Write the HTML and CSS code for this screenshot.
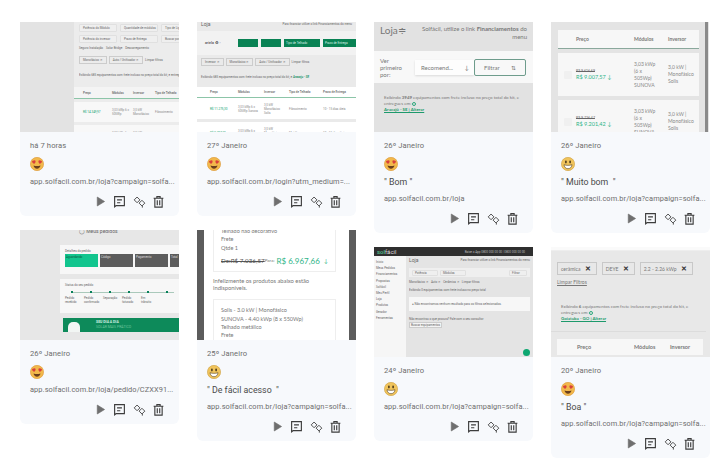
FILE: index.html
```html
<!DOCTYPE html>
<html lang="pt-BR">
<head>
  <meta charset="UTF-8" />
  <title>Feedbacks</title>
  <link rel="stylesheet" href="styles.css">
</head>
<body>

<svg class="sprite" width="0" height="0">
  <symbol id="love" viewBox="0 0 16 16">
    <circle cx="8" cy="8" r="7.6" fill="#f2b84b" stroke="#d9922f" stroke-width=".6"/>
    <path d="M4.600 4.200c-1.300-.8-2.600.3-2.200 1.600.3 1 1.400 1.700 2.400 2.100.8-.7 1.700-1.700 1.600-2.700-.1-1.200-1.200-1.800-1.800-1z" fill="#d8403a"/>
    <path d="M11.400 4.200c1.300-.8 2.600.3 2.200 1.600-.3 1-1.400 1.700-2.400 2.100-.8-.7-1.700-1.700-1.600-2.700.1-1.200 1.200-1.800 1.800-1z" fill="#d8403a"/>
    <path d="M4 9.800c2.600.8 5.400.8 8 0-.4 2.200-2 3.700-4 3.700s-3.600-1.500-4-3.700z" fill="#6b3f1d"/>
  </symbol>
  <symbol id="smile" viewBox="0 0 16 16">
    <circle cx="8" cy="8" r="7.6" fill="#f0c45c" stroke="#c99a3a" stroke-width=".6"/>
    <ellipse cx="5.600" cy="5.600" rx="1" ry="1.700" fill="#4c3a1c"/>
    <ellipse cx="10.400" cy="5.600" rx="1" ry="1.700" fill="#4c3a1c"/>
    <path d="M3.400 8.800c3 1 6.200 1 9.200 0-.3 2.800-2.300 4.600-4.600 4.600s-4.300-1.800-4.600-4.600z" fill="#fff" stroke="#5b431c" stroke-width=".7"/>
  </symbol>
  <symbol id="play" viewBox="0 0 16 16">
    <path d="M4 2.500l9 5.500-9 5.500z" fill="#6f6f6f" stroke="#6f6f6f" stroke-width=".8"/>
  </symbol>
  <symbol id="note" viewBox="0 0 16 16">
    <path d="M2 2h12v11h-10l-2 1.500zM5 6h6M5 9.500h4" fill="none" stroke="#3d3d3d" stroke-width="1.400"/>
  </symbol>
  <symbol id="swap" viewBox="0 0 16 16">
    <path d="M5 2.500L8.500 6 5 9.500 1.500 6zM11 6.500l3.500 3.500-3.500 3.500L7.500 10zM11.500 13.500v2" fill="none" stroke="#4a4a4a" stroke-width="1.200"/>
  </symbol>
  <symbol id="trash" viewBox="0 0 16 16">
    <path d="M2 4h12M6 4V2h4v2M3.500 4.500v10.500h9v-10.500M6.500 6.500v6M9.500 6.500v6" fill="none" stroke="#3d3d3d" stroke-width="1.400"/>
  </symbol>
</svg>

<main class="board">

  <div class="col">
    <article class="card">
      <div class="thumb t-filters">
        <div class="side"></div>
        <div class="main">
          <div class="sel-row"><span class="sel">Potência do Módulo</span><span class="sel">Quantidade de módulos</span><span class="sel">Tipo de Ligação</span></div>
          <div class="sel-row"><span class="sel">Potência do inversor</span><span class="sel">Prazo de Entrega</span><span class="sel">Buscar por nome</span></div>
          <div class="tiny toggles">Seguro Instalação &nbsp;&nbsp; Solar Bridge &nbsp;&nbsp; Descarregamento</div>
          <div class="chips"><span class="chip">Monofásico ✕</span><span class="chip">Auto / Unificador ✕</span><span class="tiny">Limpar filtros</span></div>
          <div class="tiny count">Exibindo 685 equipamentos com frete incluso no preço total do kit, e entregues em <b>Aracaju</b></div>
          <div class="table-head"><span>Preço</span><span>Módulos</span><span>Inversor</span><span>Tipo de Telhado</span></div>
          <div class="table-row"><span class="price">R$ 14.349,97</span><span>3,03 kWp 6 x 505Wp</span><span>3,0 kW Monofásico</span><span>Fibrocimento</span></div>
          <div class="table-row"><span class="price">R$ 14.980,10</span><span>3,03 kWp 6 x 505Wp</span><span>3,0 kW Monofásico</span><span>Fibrocimento</span></div>
        </div>
      </div>
      <div class="body">
        <div class="date">há 7 horas</div>
        <svg class="emoji"><use href="#love"/></svg>
        <div class="url">app.solfacil.com.br/loja?campaign=solfa...</div>
        <div class="actions">
          <svg class="icon"><use href="#play"/></svg><svg class="icon"><use href="#note"/></svg><svg class="icon"><use href="#swap"/></svg><svg class="icon"><use href="#trash"/></svg>
        </div>
      </div>
    </article>

    <article class="card">
      <div class="thumb t-order">
        <div class="tiny order-title">◯ Meus pedidos</div>
        <div class="panel">
          <div class="tiny">Detalhes do pedido</div>
          <div class="tiles"><span class="tile on">Aguardando</span><span class="tile">Código</span><span class="tile">Pagamento</span><span class="tile">Total</span></div>
        </div>
        <div class="panel steps">
          <div class="tiny">Status do seu pedido</div>
          <div class="line"><i></i><i></i><i></i><i></i><i></i><i></i></div>
          <div class="tiny step-names"><span>Pedido recebido</span><span>Pedido confirmado</span><span>Separação</span><span>Pedido faturado</span><span>Em trânsito</span></div>
        </div>
        <div class="banner"><span class="person"></span><div class="banner-text"><b>SEU DIA A DIA</b><span>SOLAR MAIS PRÁTICO</span></div></div>
      </div>
      <div class="body">
        <div class="date">26º Janeiro</div>
        <svg class="emoji"><use href="#love"/></svg>
        <div class="url">app.solfacil.com.br/loja/pedido/CZXX91...</div>
        <div class="actions">
          <svg class="icon"><use href="#play"/></svg><svg class="icon"><use href="#note"/></svg><svg class="icon"><use href="#swap"/></svg><svg class="icon"><use href="#trash"/></svg>
        </div>
      </div>
    </article>
  </div>

  <div class="col">
    <article class="card">
      <div class="thumb t-store">
        <div class="store-title"><span>Loja</span><span class="tiny">Para financiar utilize o link Financiamentos do menu</span></div>
        <div class="store-bar">
          <span class="brand">ariela ♻ ◦</span>
          <span class="gbtn"></span><span class="gbtn"></span><span class="gbtn wide">Tipo de Telhado</span><span class="gbtn wide">Prazo de Entrega</span>
        </div>
        <div class="chips"><span class="chip">Inversor ✕</span><span class="chip">Monofásico ✕</span><span class="chip">Auto / Unificador ✕</span><span class="tiny">Limpar filtros</span></div>
        <div class="tiny count">Exibindo 685 equipamentos com frete incluso no preço total do kit, e <b>Aracaju - SE</b></div>
        <div class="table-head"><span>Preço</span><span>Módulos</span><span>Inversor</span><span>Tipo de Telhado</span><span>Prazo de Entrega</span></div>
        <div class="table-row"><span class="price">R$ 11.275,30</span><span>3,03 kWp 6 x 505Wp Sunova</span><span>3,0 kW Monofásico Solis</span><span>Fibrocimento</span><span>10 - 15 dias úteis</span></div>
        <div class="table-row"><span class="price">R$ 9.797,30</span><span>3,03 kWp 6 x 505Wp Sunova</span><span>3,0 kW Monofásico Solis</span><span>Metálico</span><span>10 - 15 dias úteis</span></div>
      </div>
      <div class="body">
        <div class="date">27º Janeiro</div>
        <svg class="emoji"><use href="#love"/></svg>
        <div class="url">app.solfacil.com.br/login?utm_medium=...</div>
        <div class="actions">
          <svg class="icon"><use href="#play"/></svg><svg class="icon"><use href="#note"/></svg><svg class="icon"><use href="#swap"/></svg><svg class="icon"><use href="#trash"/></svg>
        </div>
      </div>
    </article>

    <article class="card">
      <div class="thumb t-cart">
        <div class="cart-box first">
          <div>Telhado não decorativo</div>
          <div>Frete</div>
          <div>Qtde 1</div>
          <div class="cart-price"><s>De:R$ 7.036,57</s><small>Para:</small><b>R$ 6.967,66</b><em>↓</em></div>
        </div>
        <p>Infelizmente os produtos abaixo estão indisponíveis.</p>
        <div class="cart-box">
          <div>Solis - 3.0 kW | Monofásico</div>
          <div>SUNOVA - 4.40 kWp (8 x 550Wp)</div>
          <div>Telhado metálico</div>
          <div>Frete</div>
        </div>
      </div>
      <div class="body">
        <div class="date">25º Janeiro</div>
        <svg class="emoji"><use href="#smile"/></svg>
        <div class="quote">" De fácil acesso  "</div>
        <div class="url">app.solfacil.com.br/loja?campaign=solfa...</div>
        <div class="actions">
          <svg class="icon"><use href="#play"/></svg><svg class="icon"><use href="#note"/></svg><svg class="icon"><use href="#swap"/></svg><svg class="icon"><use href="#trash"/></svg>
        </div>
      </div>
    </article>
  </div>

  <div class="col">
    <article class="card">
      <div class="thumb t-mobile">
        <div class="m-top"><span class="m-title">Loja≑</span><span class="m-note">Solfácil, utilize o link <b>Financiamentos</b> do menu</span></div>
        <div class="m-sort">
          <span class="m-label">Ver primeiro por:</span>
          <span class="m-select">Recomend... <i>↓</i></span>
          <span class="m-filter">Filtrar <i>⇅</i></span>
        </div>
        <div class="m-count">Exibindo <b>3949</b> equipamentos com frete incluso no preço total do kit, e entregues em: <i class="pin"></i><br><a>Aracajú - SE | Alterar</a></div>
      </div>
      <div class="body">
        <div class="date">26º Janeiro</div>
        <svg class="emoji"><use href="#love"/></svg>
        <div class="quote">" Bom "</div>
        <div class="url">app.solfacil.com.br/loja</div>
        <div class="actions">
          <svg class="icon"><use href="#play"/></svg><svg class="icon"><use href="#note"/></svg><svg class="icon"><use href="#swap"/></svg><svg class="icon"><use href="#trash"/></svg>
        </div>
      </div>
    </article>

    <article class="card">
      <div class="thumb t-desktop">
        <div class="d-head"><span class="d-logo"><b>sol</b>fácil</span><span class="tiny">Baixe o App 0800 000 00 00 | 0800 000 00 00</span></div>
        <div class="d-wrap">
          <div class="d-side tiny">
            <div>Inicio</div><div>Meus Pedidos</div><div>Financiamentos</div><div>Propostas</div><div>Solfácil</div><div>Meu Perfil</div><div>Loja</div><div>Produtos</div><div>Gerador</div><div>Ferramentas</div>
          </div>
          <div class="d-main">
            <div class="d-title"><span>Loja</span><span class="tiny">Para financiar utilize o link Financiamentos do menu</span></div>
            <div class="d-filter"><span class="sel">Potência</span><span class="sel">Módulos</span><span class="sel end">Filtrar</span></div>
            <div class="tiny">Monofásico ✕ &nbsp; Auto ✕ &nbsp; Cerâmica ✕ &nbsp; Limpar filtros</div>
            <div class="tiny count">Exibindo 0 equipamentos com frete incluso no preço total</div>
            <div class="d-alert tiny">● Não encontramos nenhum resultado para os filtros selecionados.</div>
            <div class="tiny">Não encontrou o que procura? Fale com o seu consultor</div>
            <span class="d-btn tiny">Buscar equipamentos</span>
          </div>
        </div>
        <span class="d-fab"></span>
      </div>
      <div class="body">
        <div class="date">24º Janeiro</div>
        <svg class="emoji"><use href="#smile"/></svg>
        <div class="url">app.solfacil.com.br/loja?campaign=solfa...</div>
        <div class="actions">
          <svg class="icon"><use href="#play"/></svg><svg class="icon"><use href="#note"/></svg><svg class="icon"><use href="#swap"/></svg><svg class="icon"><use href="#trash"/></svg>
        </div>
      </div>
    </article>
  </div>

  <div class="col">
    <article class="card">
      <div class="thumb t-list">
        <div class="l-head"><span>Preço</span><span>Módulos</span><span>Inversor</span></div>
        <div class="l-row">
          <span class="l-check"></span>
          <span class="l-price"><s>R$ 9.616,69</s><b>R$ 9.007,57 ↓</b></span>
          <span class="l-mod">3,03 kWp (6 x 505Wp) SUNOVA</span>
          <span class="l-inv">3,0 kW | Monofásico Solis</span>
        </div>
        <div class="l-row">
          <span class="l-check"></span>
          <span class="l-price"><s>R$ 9.726,47</s><b>R$ 9.201,42 ↓</b></span>
          <span class="l-mod">3,03 kWp (6 x 505Wp) SUNOVA</span>
          <span class="l-inv">3,0 kW | Monofásico Solis</span>
        </div>
      </div>
      <div class="body">
        <div class="date">26º Janeiro</div>
        <svg class="emoji"><use href="#smile"/></svg>
        <div class="quote">" Muito bom  "</div>
        <div class="url">app.solfacil.com.br/loja?campaign=solfa...</div>
        <div class="actions">
          <svg class="icon"><use href="#play"/></svg><svg class="icon"><use href="#note"/></svg><svg class="icon"><use href="#swap"/></svg><svg class="icon"><use href="#trash"/></svg>
        </div>
      </div>
    </article>

    <article class="card">
      <div class="thumb t-tags">
        <div class="t-top"></div>
        <div class="tags"><span class="tag">cerâmica <b>✕</b></span><span class="tag">DEYE <b>✕</b></span><span class="tag">2.2 - 2.26 kWp <b>✕</b></span></div>
        <a class="clear">Limpar Filtros</a>
        <div class="m-count">Exibindo <b>6</b> equipamentos com frete incluso no preço total do kit, e entregues em: <i class="pin"></i><br><a>Goiatuba - GO | Alterar</a></div>
        <div class="tag-head"><span>Preço</span><span>Módulos</span><span>Inversor</span></div>
      </div>
      <div class="body">
        <div class="date">20º Janeiro</div>
        <svg class="emoji"><use href="#love"/></svg>
        <div class="quote">" Boa "</div>
        <div class="url">app.solfacil.com.br/loja?campaign=solfa...</div>
        <div class="actions">
          <svg class="icon"><use href="#play"/></svg><svg class="icon"><use href="#note"/></svg><svg class="icon"><use href="#swap"/></svg><svg class="icon"><use href="#trash"/></svg>
        </div>
      </div>
    </article>
  </div>

</main>

</body>
</html>
```

FILE: styles.css
```css
* { box-sizing: border-box; }

html, body {
  height: 467px;
  overflow: hidden;
}

body {
  margin: 0;
  background: #fff;
  font-family: Roboto, "Liberation Sans", sans-serif;
  color: #666;
}

.sprite { position: absolute; }

.board {
  display: flex;
  gap: 18px;
  padding: 22px 10px 0 20px;
}

.col {
  display: flex;
  flex-direction: column;
  gap: 14px;
  width: 159px;
}

.card {
  background: #f7f9fc;
  border-radius: 0 0 6px 6px;
}

/* card text */
.body {
  display: flex;
  flex-direction: column;
  gap: 5px;
  padding: 8px 10px 7px;
}

.date, .url {
  font-size: 7.400px;
  line-height: 12px;
  letter-spacing: .1px;
  color: #6d6d6d;
  white-space: nowrap;
}

.date { font-size: 7.600px; }

.quote {
  font-size: 8.800px;
  line-height: 12px;
  color: #4a4a4a;
  white-space: pre;
}

.emoji {
  width: 14px;
  height: 14px;
  display: block;
}

.actions {
  display: flex;
  justify-content: flex-end;
  align-items: center;
  gap: 6.500px;
  height: 16px;
  padding-right: 4px;
}

.icon {
  width: 13px;
  height: 13px;
  display: block;
}

/* thumbnails */
.thumb {
  height: 110px;
  overflow: hidden;
  position: relative;
  font-size: 3px;
  line-height: 4px;
  color: #666;
  background: #e6e6e6;
}

.tiny {
  font-size: 3px;
  line-height: 4px;
  color: #666;
  white-space: nowrap;
}

.count { white-space: nowrap; }
.count b { color: #0a8a5c; font-weight: 500; }

.sel {
  display: inline-block;
  flex: none;
  width: 38px;
  height: 8px;
  padding: 2px 3px;
  background: #efefef;
  border: 1px solid #e0e0e0;
  border-radius: 1px;
  font-size: 3px;
  line-height: 3px;
  white-space: nowrap;
  overflow: hidden;
}

.sel-row {
  display: flex;
  gap: 3px;
  margin-bottom: 3px;
}

.chips {
  display: flex;
  align-items: center;
  gap: 2px;
}

.chip {
  padding: 1px 3px;
  border: 1px solid #ccc;
  font-size: 3px;
  line-height: 4px;
  white-space: nowrap;
}

.table-head {
  display: flex;
  align-items: center;
  height: 12px;
  padding-left: 9px;
  background: #f4f4f4;
  border-bottom: 1px solid #8cc5a8;
  font-weight: 500;
  white-space: nowrap;
}

.table-row {
  display: flex;
  align-items: center;
  height: 20px;
  margin-bottom: 3px;
  padding-left: 9px;
  background: #f8f8f8;
  color: #888;
}

.price {
  color: #10a06c;
  white-space: nowrap;
}

.table-head span, .table-row span { flex: none; }

/* thumb 1: filter page */
.t-filters {
  display: flex;
  background: #e3e3e3;
}

.t-filters .side { width: 54px; flex: none; }

.t-filters .main {
  flex: none;
  width: 105px;
  padding: 2px 0 0 0;
  background: #ececec;
}

.t-filters .sel-row, .t-filters .toggles, .t-filters .chips, .t-filters .count { margin-left: 5px; }
.t-filters .toggles { margin-bottom: 6px; }
.t-filters .chips { margin-bottom: 9px; }
.t-filters .count { margin-bottom: 10px; overflow: hidden; }
.t-filters .table-row { margin-top: 3px; }

.t-filters .table-head span:nth-child(1), .t-filters .table-row span:nth-child(1) { width: 29px; }
.t-filters .table-head span:nth-child(2), .t-filters .table-row span:nth-child(2) { width: 21px; padding-right: 3px; }
.t-filters .table-head span:nth-child(3), .t-filters .table-row span:nth-child(3) { width: 22px; padding-right: 3px; }

/* thumb 2: store with green buttons */
.t-store { background: #eaeaea; }

.store-title {
  display: flex;
  justify-content: space-between;
  height: 6px;
  padding: 0 4px;
  font-size: 5px;
  line-height: 4px;
  white-space: nowrap;
}

.store-bar {
  display: flex;
  align-items: center;
  gap: 3px;
  height: 24px;
  margin: 3px 0;
  padding-left: 8px;
  background: #f2f2f2;
}

.brand {
  width: 30px;
  flex: none;
  font-size: 3.500px;
  font-weight: 700;
  white-space: nowrap;
}

.gbtn {
  flex: none;
  width: 20px;
  height: 8px;
  padding: 2px;
  background: #098254;
  color: #d8f0e4;
  white-space: nowrap;
  overflow: hidden;
}

.gbtn.wide { width: 36px; }

.t-store .chips { margin: 0 0 9px 4px; }
.t-store .count { margin: 0 0 8px 4px; }
.t-store .table-head { height: 11px; background: #fff; padding-left: 13px; }
.t-store .table-row { height: 21px; background: #fff; padding-left: 13px; }
.t-store .table-head span:nth-child(1), .t-store .table-row span:nth-child(1) { width: 28px; }
.t-store .table-head span:nth-child(2), .t-store .table-row span:nth-child(2) { width: 26px; padding-right: 4px; }
.t-store .table-head span:nth-child(3), .t-store .table-row span:nth-child(3) { width: 25px; padding-right: 4px; }
.t-store .table-head span:nth-child(4), .t-store .table-row span:nth-child(4) { width: 34px; }

/* thumb 3: mobile store */
.t-mobile { background: #e2e2e2; color: #777; }

.m-top {
  display: flex;
  justify-content: space-between;
  height: 29px;
  padding: 3px 6px;
}

.m-title {
  font-family: Lato, sans-serif;
  font-size: 10px;
  line-height: 10px;
}

.m-note {
  width: 113px;
  text-align: right;
  font-family: Lato, sans-serif;
  font-size: 6px;
  line-height: 8px;
}

.m-sort {
  display: flex;
  align-items: center;
  height: 32px;
  padding-left: 6px;
  background: #f8f8f8;
  font-family: Lato, sans-serif;
  font-size: 6px;
  line-height: 7px;
}

.m-label { width: 35px; flex: none; padding-right: 10px; }

.m-select {
  display: flex;
  justify-content: space-between;
  width: 59px;
  flex: none;
  padding: 4px 5px 4px 6px;
  white-space: nowrap;
  background: #fdfdfd;
  box-shadow: 0 1px 2px rgba(0,0,0,.12);
}

.m-filter {
  display: flex;
  justify-content: space-between;
  width: 52px;
  flex: none;
  padding: 4px 9px;
  border: 1px solid #6e9c8c;
  border-radius: 2px;
  white-space: nowrap;
}

.m-select i, .m-filter i { font-style: normal; }

.m-count {
  padding: 12px 10px;
  font-family: Lato, sans-serif;
  font-size: 4.400px;
  line-height: 6px;
  color: #777;
}

.m-count a {
  color: #1d9a6c;
  font-weight: 700;
  text-decoration: underline;
}

.pin {
  display: inline-block;
  width: 4px;
  height: 4px;
  border: 1px solid #2aa87a;
  border-radius: 50%;
  vertical-align: middle;
}

/* thumb 4: price list */
.t-list {
  padding: 8px 10px 0 7px;
  background: #e4e4e4;
  border-right: 1px solid #fff;
  font-family: Lato, sans-serif;
  font-size: 5px;
  line-height: 7px;
}

.t-list::after {
  content: "";
  position: absolute;
  top: 0;
  right: 1px;
  bottom: 0;
  width: 3px;
  background: #8a8a8a;
}

.l-head {
  display: flex;
  align-items: center;
  height: 19px;
  padding-left: 18px;
  margin-bottom: 4px;
  background: #f7f7f7;
  border-bottom: 1px solid #8aa89c;
  font-weight: 700;
  color: #777;
}

.l-head span:first-child { width: 58px; }
.l-head span:nth-child(2) { width: 34px; }

.l-row {
  display: flex;
  align-items: center;
  height: 43px;
  margin-bottom: 4px;
  padding-left: 6px;
  background: #f7f7f7;
  color: #888;
  overflow: hidden;
}

.l-check {
  width: 8px;
  height: 8px;
  margin-right: 4px;
  background: #f0f0f0;
  border-radius: 1px;
  flex: none;
}

.l-price {
  width: 58px;
  flex: none;
  display: flex;
  flex-direction: column;
}

.l-price s { font-size: 3.500px; line-height: 5px; color: #666; }
.l-price b { font-size: 5.500px; font-weight: 400; color: #2eb487; white-space: nowrap; }

.l-mod { width: 25px; margin-right: 9px; flex: none; }
.l-inv { width: 28px; flex: none; }

/* thumb 5: order page */
.t-order { background: #e7e7e7; padding: 0 0 0 40px; }

.order-title {
  margin: -1px 0 12px 19px;
  font-size: 5px;
}

.panel {
  padding: 4px 5px;
  margin: 0 0 5px 0;
  width: 119px;
  height: 29px;
  background: #f7f7f7;
  overflow: hidden;
}

.steps { height: 34px; }

.tiles {
  display: flex;
  gap: 2px;
  margin-top: 1px;
}

.tile {
  flex: none;
  width: 33px;
  height: 13px;
  padding: 1px;
  background: #5c5c5c;
  color: #ddd;
  white-space: nowrap;
  overflow: hidden;
}

.tile.on { background: #12c58e; color: #0a5a40; }

.line {
  display: flex;
  gap: 17px;
  margin: 4px 0 3px 6px;
  height: 2px;
  background: linear-gradient(#aac9bb, #aac9bb) 0 50% / 100% 1px no-repeat;
}

.line i {
  flex: none;
  width: 2px;
  height: 2px;
  background: #07805a;
}

.step-names { display: flex; gap: 4px; }
.step-names span { flex: none; width: 15px; white-space: normal; }

.banner {
  display: flex;
  gap: 16px;
  align-items: flex-end;
  width: 116px;
  height: 14px;
  margin: 0 0 0 3px;
  padding-left: 5px;
  background: #0d8a5a;
  color: #d7efe2;
  font-size: 3.500px;
  line-height: 5px;
  white-space: nowrap;
}

.person {
  flex: none;
  width: 12px;
  height: 10px;
  background: #f2f6f4;
  border-radius: 5px 5px 0 0;
}

.banner-text {
  display: flex;
  flex-direction: column;
  padding-bottom: 2px;
}

.banner-text span { color: #6fc79f; }

/* thumb 6: cart */
.t-cart {
  width: 159px;
  padding: 0 0 0 9px;
  background: #fff;
  border-left: 7px solid #5c5c5c;
  border-right: 7px solid #5c5c5c;
  font-family: Lato, sans-serif;
  font-size: 5.500px;
  line-height: 8.300px;
  color: #777;
}

.t-cart p {
  width: 105px;
  margin: 6px 0 8px;
  font-size: 5.800px;
  line-height: 6.700px;
}

.cart-box {
  width: 123px;
  padding: 6px 7px;
  border: 1px solid #eee;
  white-space: nowrap;
}

.cart-box.first {
  border-top: 0;
  padding: 0 7px 3px;
  margin-top: -3px;
}

.cart-price {
  display: flex;
  align-items: center;
  margin-top: 2px;
  height: 14px;
}

.cart-price s { font-size: 6.300px; color: #555; }
.cart-price small { font-size: 4.500px; margin-right: 2px; }
.cart-price b { font-size: 8px; font-weight: 400; color: #2eb487; }
.cart-price em { font-style: normal; color: #2eb487; margin-left: 4px; }

/* thumb 7: desktop store */
.t-desktop { background: #e4e4e4; }

.d-head {
  display: flex;
  justify-content: space-between;
  align-items: center;
  height: 9px;
  padding: 0 8px 0 3px;
  background: #2f2f2f;
}

.d-head .tiny { color: #bbb; }
.d-logo { font-size: 6px; color: #ddd; }
.d-logo b { color: #52c08e; font-weight: 500; }

.d-wrap { display: flex; height: 101px; }

.d-side {
  width: 32px;
  flex: none;
  padding: 3px 2px;
  background: #f6f6f6;
  line-height: 6.200px;
}

.d-main {
  flex: 1;
  min-width: 0;
  padding: 0 3px 0 3px;
}

.d-title {
  display: flex;
  justify-content: space-between;
  height: 12px;
  padding-top: 2px;
  font-size: 5px;
}

.d-filter {
  display: flex;
  gap: 2px;
  align-items: center;
  height: 9px;
  margin-bottom: 3px;
  padding-left: 3px;
  background: #efefef;
}

.d-filter .sel { width: 26px; height: 6px; padding: 1px 2px; }
.d-filter .end { margin-left: auto; margin-right: 3px; width: 18px; }

.d-main .count { margin: 4px 0 5px; overflow: hidden; }

.d-alert {
  padding: 5px 3px;
  height: 14px;
  margin-bottom: 6px;
  background: #f7f7f7;
  overflow: hidden;
}

.d-btn {
  display: inline-block;
  margin-top: 1px;
  padding: 0 1px;
  background: #f4f4f4;
  border: 1px solid #ccc;
}

.d-fab {
  position: absolute;
  right: 3px;
  bottom: 1px;
  width: 7px;
  height: 7px;
  border-radius: 50%;
  background: #0da771;
}

/* thumb 8: filter tags */
.t-tags {
  background: #e8e8e8;
  font-family: Lato, sans-serif;
  color: #777;
}

.t-top {
  height: 4px;
  background: #fafafa;
  border-bottom: 1px solid #eee;
}

.tags {
  display: flex;
  gap: 5px;
  margin: 11px 0 4px 6px;
}

.tag {
  padding: 2px 5px 2px 3px;
  height: 13px;
  border: 1px solid #c8c8c8;
  font-size: 5px;
  line-height: 7px;
  white-space: nowrap;
}

.tag b {
  margin-left: 3px;
  font-size: 7px;
  color: #333;
}

.clear {
  display: block;
  margin-left: 6px;
  font-size: 5px;
  line-height: 6px;
  text-decoration: underline;
}

.t-tags .m-count {
  margin: 0 4px 7px 0;
  padding: 19px 0 9px 10px;
  border-bottom: 1px solid #dcdcdc;
}

.tag-head {
  display: flex;
  align-items: center;
  width: 146px;
  height: 16px;
  margin-left: 6px;
  padding-left: 20px;
  background: #f7f7f7;
  font-size: 5.500px;
  font-weight: 700;
}

.tag-head span:first-child { width: 57px; }
.tag-head span:nth-child(2) { width: 36px; }
```
